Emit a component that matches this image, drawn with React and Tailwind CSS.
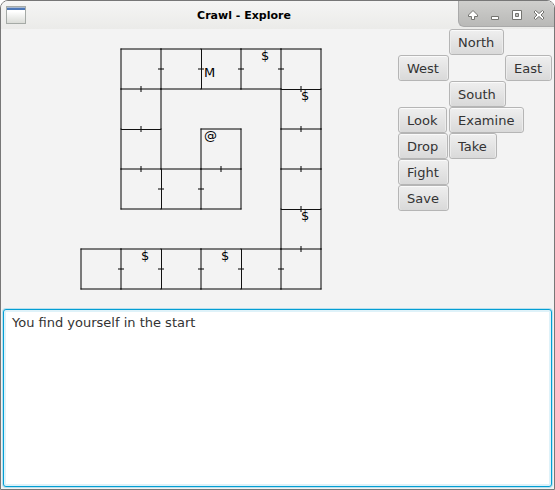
import React from "react";

const CELL = 40;

// Rooms as [column, row] on the dungeon grid.
const rooms = [
  [1, 0], [2, 0], [3, 0], [4, 0], [5, 0],
  [1, 1], [5, 1],
  [1, 2], [3, 2], [5, 2],
  [1, 3], [2, 3], [3, 3], [5, 3],
  [5, 4],
  [0, 5], [1, 5], [2, 5], [3, 5], [4, 5], [5, 5],
];

// Walls that look solid rather than soft: x, y, width, height.
const solidWalls = [
  [120, 0, 1, 40], [40, 80, 40, 1], [200, 40, 40, 1], [80, 120, 1, 40],
  [80, 200, 1, 40], [160, 200, 1, 40], [200, 160, 40, 1],
];

// Each wall once, even where two rooms share it.
const isSolid = (x, y, across) =>
  solidWalls.some(([sx, sy, w]) => sx === x && sy === y && (w > 1) === across);

const walls = new Set();
for (const [c, r] of rooms) {
  const x = c * CELL;
  const y = r * CELL;
  for (const [wx, wy, across] of [
    [x, y, true], [x, y + CELL, true], [x, y, false], [x + CELL, y, false],
  ]) {
    if (!isSolid(wx, wy, across)) {
      walls.add(`M${wx} ${wy}${across ? "h" : "v"}${CELL}`);
    }
  }
}

// Doors on vertical walls (crossed by a horizontal tick), then on horizontal walls.
const sideDoors = [
  [80, 20], [120, 20], [160, 20], [200, 20], [80, 140], [120, 140],
  [40, 220], [80, 220], [120, 220], [160, 220], [200, 220],
];
const floorDoors = [
  [60, 40], [60, 80], [60, 120], [140, 120],
  [220, 40], [220, 80], [220, 120], [220, 160], [220, 200],
];

const items = [
  ["M", 123, 28], ["$", 180, 11], ["$", 220, 51], ["@", 123, 91],
  ["$", 220, 171], ["$", 60, 211], ["$", 140, 211],
];

function DungeonMap() {
  return (
    <svg width="242" height="242" viewBox="-1 -1 242 242" role="img" aria-label="Dungeon map" className="block">
      <g fill="none" stroke="#000" strokeLinecap="square">
        {[...walls].map((d) => (
          <path key={d} d={d} />
        ))}
      </g>
      <g fill="none" stroke="#000">
        {sideDoors.map(([x, y]) => (
          <path key={`${x}-${y}`} d={`M${x - 3} ${y}h6`} />
        ))}
        {floorDoors.map(([x, y]) => (
          <path key={`${x}-${y}`} d={`M${x} ${y - 3}v6`} />
        ))}
      </g>
      <g fill="#111" shapeRendering="crispEdges">
        {solidWalls.map(([x, y, w, h]) => (
          <rect key={`${x}-${y}`} x={x} y={y} width={w} height={h} />
        ))}
      </g>
      <g fill="#000" fontSize="13">
        {items.map(([glyph, x, y]) => (
          <text key={`${x}-${y}`} x={x} y={y}>{glyph}</text>
        ))}
      </g>
    </svg>
  );
}

function TitleBar() {
  return (
    <header className="flex h-7 shrink-0 items-start bg-linear-to-b from-[#f5f5f4] to-[#ebebe9]">
      <svg width="20" height="18" viewBox="0 0 20 18" className="ml-[5px] mt-[5px] shrink-0" aria-hidden="true">
        <defs>
          <linearGradient id="pane" x1="0" y1="0" x2="0" y2="1">
            <stop offset="0.3" stopColor="#fff" />
            <stop offset="1" stopColor="#d9dbd6" />
          </linearGradient>
        </defs>
        <rect x="0.5" y="0.5" width="19" height="17" fill="url(#pane)" stroke="#a5aaa6" />
        <rect x="1" y="1" width="18" height="1" fill="#a9b9d0" />
        <rect x="1" y="2" width="18" height="2" fill="#4d78b8" />
      </svg>
      <h1 className="flex-1 pt-px pl-[4px] text-center text-[11px] leading-7 font-bold text-black">Crawl - Explore</h1>
      <div className="flex h-[26px] shrink-0 gap-[2px] rounded-bl-md border-b border-l border-[#aaa] bg-linear-to-b from-[#cfcfcd] to-[#b9b9b7] pr-[5px] pl-[4px]">
        <TitleButton label="Roll up">
          <path d="M10 4.5L14.5 9V10.5H11.5V13.5H8.5V10.5H5.5V9Z" />
        </TitleButton>
        <TitleButton label="Minimize">
          <rect x="6.5" y="10.5" width="7" height="3" />
        </TitleButton>
        <TitleButton label="Maximize">
          <path fillRule="evenodd" d="M5.5 4.5H14.5V13.5H5.5ZM8.5 7.5H11.5V10.5H8.5Z" />
        </TitleButton>
        <TitleButton label="Close">
          <path d="M6.5 4.5L10 7.5L13.5 4.5L15 6L12 9L15 12L13.5 13.5L10 10.5L6.5 13.5L5 12L8 9L5 6Z" />
        </TitleButton>
      </div>
    </header>
  );
}

function TitleButton({ label, children }) {
  return (
    <button type="button" aria-label={label} className="flex h-7 w-5 items-center justify-center">
      <svg width="20" height="18" viewBox="0 0 20 18" fill="#fff" stroke="#747470" strokeLinejoin="round">
        {children}
      </svg>
    </button>
  );
}

function Command({ children, className = "" }) {
  return (
    <button
      type="button"
      className={`h-[26px] justify-self-start rounded-[3px] border border-[#b5b5b5] bg-linear-to-b from-[#efefef] to-[#d9d9d9] pt-px pr-[9px] pl-2 text-[13px] leading-[23px] whitespace-nowrap text-[#333] shadow-[inset_0_1px_0_#fafafa,inset_1px_0_0_#ececec,inset_-1px_0_0_#ececec] ${className}`}
    >
      {children}
    </button>
  );
}

export default function App() {
  return (
    <div className="flex min-h-screen flex-col overflow-hidden rounded-t-lg border border-[#777] bg-[#f3f3f3] font-['DejaVu_Sans',sans-serif]">
      <TitleBar />
      <main className="flex flex-1 flex-col px-[2px] pb-[2px]">
        <div className="flex">
          <div className="flex flex-1 justify-center pt-[19px] pb-[19px]">
            <DungeonMap />
          </div>
          <div className="grid auto-rows-[26px] grid-cols-[51px_56px_47px] content-start">
            <Command className="col-start-2">North</Command>
            <Command className="col-start-1">West</Command>
            <Command className="col-start-3">East</Command>
            <Command className="col-start-2">South</Command>
            <Command className="col-start-1">Look</Command>
            <Command className="col-span-2">Examine</Command>
            <Command className="col-start-1">Drop</Command>
            <Command>Take</Command>
            <Command className="col-start-1">Fight</Command>
            <Command className="col-start-1">Save</Command>
          </div>
        </div>
        <textarea
          aria-label="Game log"
          defaultValue="You find yourself in the start"
          className="block flex-1 resize-none rounded-[3px] border border-[#039ed3] bg-white px-2 py-[5px] text-[13px] leading-4 text-[#333] shadow-[inset_0_0_0_2px_#dff2f9,0_0_0_1px_#b9e0ee] outline-none"
        />
      </main>
    </div>
  );
}
